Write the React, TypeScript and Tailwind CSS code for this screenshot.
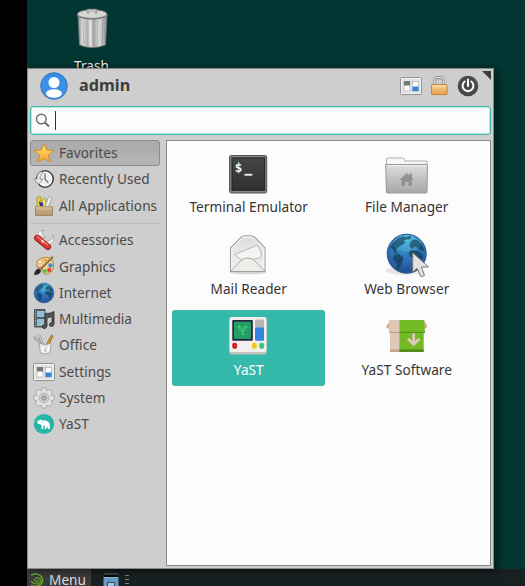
import type { ReactNode } from "react";

function Globe() {
  return (
    <g>
      <circle cx="20" cy="20" r="19.5" fill="url(#globe)" stroke="#24558a" strokeWidth="1" />
      <path
        d="M3 15 L6 9 L12 4 L18 2.5 L21 5 L17 7 L19 9 L14 12 L11 14 L9 17 L11 20 L8 19 L5 14 Z M8 21 L12 20 L17 24 L15 30 L12 36 L10 35 L10 30 L6 25 Z M22 19 L25 16 L29 17 L32 17 L37 22 L34 28 L31 31 L28 24 L23 23 Z M23 10 L26 6 L31 6 L36 12 L38 18 L33 16 L29 13 L25 15 L23 13 Z M20 3 L24 2 L24 5 L21 6 Z"
        fill="#174766"
        opacity="0.88"
      />
      <ellipse cx="20" cy="10" rx="14" ry="8" fill="#8be7ff" opacity="0.13" />
    </g>
  );
}

function Panel() {
  return (
    <g>
      <rect x="0.5" y="2.5" width="21" height="17" rx="1" fill="#f2f2f2" stroke="#929292" />
      <rect x="2" y="4" width="18" height="14" fill="#e2e3e3" />
      <rect x="4" y="6.5" width="6" height="9.5" fill="#fff" stroke="#a4a4a4" strokeWidth="0.6" />
      <rect x="4" y="6" width="6" height="4.5" fill="#777" />
      <rect x="12.5" y="6.5" width="6" height="9.5" fill="#fff" stroke="#a4a4a4" strokeWidth="0.6" />
      <rect x="12.5" y="11.5" width="6" height="4.5" fill="#3685dc" />
    </g>
  );
}

const teeth = [0, 45, 90, 135, 180, 225, 270, 315];

const small: Record<string, ReactNode> = {
  Favorites: (
    <path d="M11 1.5 L13.7 8 L20.8 8.5 L15.4 13.1 L17.2 20 L11 16.3 L4.8 20 L6.6 13.1 L1.2 8.5 L8.3 8 Z" fill="url(#star)" stroke="#d58d21" strokeWidth="1" strokeLinejoin="round" />
  ),
  "Recently Used": (
    <g>
      <circle cx="12" cy="11" r="8.2" fill="#eee" stroke="#454545" strokeWidth="1.6" />
      <circle cx="12" cy="11" r="6.6" fill="none" stroke="#fff" strokeWidth="1.2" />
      <path d="M12 5.5 V11 L15.5 15" fill="none" stroke="#555" strokeWidth="1.1" />
      <path d="M8.5 3.5 C4.5 5 4 8 4 11 H.7 L5.5 16.5 L10 11 H7 C7 8 8 6 10 5 Z" fill="#e7e7e7" stroke="#777" strokeWidth="0.7" />
    </g>
  ),
  "All Applications": (
    <g>
      <path d="M4 2 H8 V5 L7 7 L8 12 H4 Z" fill="#edce35" stroke="#947c16" strokeWidth="0.6" />
      <path d="M9 5 L12 3 L14 11 L10 12 Z" fill="#f2db55" stroke="#9a8023" strokeWidth="0.6" />
      <path d="M6 6.5 L10 8 V12 H7 Z" fill="#373d84" />
      <path d="M15 3 Q19 0 18.5 4 L15.5 12 H12 Z" fill="#eee" stroke="#888" strokeWidth="0.7" />
      <path d="M2.5 11.5 H19.5 V20.5 H2.5 Z" fill="url(#box)" stroke="#927c5e" strokeWidth="0.8" />
      <path d="M3 12 H19 M3 14 H19" stroke="#dfc39b" strokeWidth="0.8" />
    </g>
  ),
  Accessories: (
    <g>
      <path d="M10 8 L4 5.5 L6.5 2.5 L11 1 L8.5 4 L13 9 Z M14 13 L18 11 L20 6 L21 12 L16 16 Z" fill="#f5f5f5" stroke="#999" strokeWidth="0.7" />
      <path d="M4.2 9 L15 17.8" stroke="#8d1715" strokeWidth="6.2" strokeLinecap="round" />
      <path d="M4.2 8.8 L15 17.5" stroke="#d83a33" strokeWidth="4.9" strokeLinecap="round" />
      <path d="M4 7.4 L15 16" stroke="#f18a7d" strokeWidth="1.1" />
      <path d="M8 11.2 L11 13.6 M10.2 10.9 L9 13.8" stroke="#fff" strokeWidth="0.9" />
    </g>
  ),
  Graphics: (
    <g>
      <path d="M4 12 Q2 5 9 3 Q18 0 20.5 8 Q22 17 14 19 Q10 20 10 16 Q9 12 4 12 Z" fill="#efd19d" stroke="#b4813f" strokeWidth="1" />
      <circle cx="7" cy="7" r="2" fill="#fff4c9" stroke="#c58b40" strokeWidth="0.6" />
      <circle cx="12" cy="5.3" r="1.7" fill="#f3a538" />
      <circle cx="17.5" cy="10.5" r="2.2" fill="#438ad0" />
      <circle cx="16.3" cy="15" r="2.1" fill="#e23b32" />
      <circle cx="12" cy="16" r="2.1" fill="#61c44a" />
      <path d="M7 14.5 L20 1.5" stroke="#765528" strokeWidth="2" />
      <path d="M7 14 L20 1" stroke="#ddb25c" strokeWidth="0.8" />
      <path d="M1 20 Q2 14 6 13.5 L8 16 Q7 20 1 20 Z" fill="#272727" />
    </g>
  ),
  Internet: (
    <g transform="translate(0.8 0.8) scale(.51)"><Globe /></g>
  ),
  Multimedia: (
    <g>
      <path d="M1.5 1.5 H12 V19 H1.5 Z" fill="#525b60" stroke="#3c4447" strokeWidth="0.8" />
      <path d="M4 3 H11.5 V9 H4 Z M4 11 H11.5 V18 H4 Z" fill="#91bed5" />
      <path d="M2.7 2.5 V19" stroke="#ddd" strokeWidth="1" strokeDasharray="1 1.4" />
      <path d="M12 5.5 Q17 6 21 3.5 V16 Q21 18.5 18 18.5 Q16 18 16.5 16 Q17 14.5 19 14.5 V8.5 L14 10 V18 Q13.5 21 10.5 20.5 Q8.3 19.5 9.5 17.5 Q10.5 16.5 12 16.8 Z" fill="#555" stroke="#2e2e2e" strokeWidth="0.8" />
    </g>
  ),
  Office: (
    <g>
      <path d="M18.3 1 L20 2 L15 13 L12.5 12 Z" fill="#d7922e" stroke="#906023" strokeWidth="0.7" />
      <path d="M1.5 2 Q2 5 5 6 L10 13 M6 1 Q8 4 8 7 L11 12" fill="none" stroke="#888" strokeWidth="2.2" />
      <path d="M1.5 2 Q2 5 5 6 L10 13 M6 1 Q8 4 8 7 L11 12" fill="none" stroke="#ddd" strokeWidth="1" />
      <path d="M6 9 Q12 12 18 9 L17 19 Q12 21 7.5 19 Z" fill="#eee" fillOpacity="0.85" stroke="#999" strokeWidth="0.8" />
      <path d="M9 13 L9.5 18 M15.5 12 L15 18" stroke="#fff" strokeWidth="1.4" />
      <path d="M12.5 14 V18" stroke="#bbb" strokeWidth="1.4" />
    </g>
  ),
  Settings: <Panel />,
  System: (
    <g>
      {teeth.map((angle) => (
        <rect key={angle} x="8.6" y="0.9" width="4.8" height="5" rx="1.2" fill="#e2e2e2" stroke="#999" strokeWidth="0.8" transform={`rotate(${angle} 11 11)`} />
      ))}
      <circle cx="11" cy="11" r="8" fill="#e0e0e0" stroke="#a2a2a2" strokeWidth="0.6" />
      {teeth.map((angle) => (
        <rect key={angle} x="9.1" y="2" width="3.8" height="4" fill="#e2e2e2" transform={`rotate(${angle} 11 11)`} />
      ))}
      <circle cx="11" cy="11" r="4.9" fill="#cfcfcf" stroke="#ababab" strokeWidth="0.8" />
      <circle cx="11" cy="11" r="2.2" fill="#b5b5b5" stroke="#888" strokeWidth="0.9" />
    </g>
  ),
  YaST: (
    <g>
      <circle cx="11" cy="11" r="10.1" fill="#27b6a5" />
      <path d="M4.5 6.3 L5.6 8 L7.2 6.5 L9 7.3 L13.5 7.7 Q16 8.5 16.8 11 V16 H15.1 L14.3 13.3 L13.3 16 H11.8 L12 13 L10.6 12.5 L10.3 16 H8.6 L8.4 12 L6.5 11 L4.6 10.8 Z" fill="#fff" />
      <path d="M8.5 8 L9.6 10.2" stroke="#74cec4" strokeWidth="0.7" />
    </g>
  ),
};

const large: Record<string, ReactNode> = {
  "Terminal Emulator": (
    <g>
      <rect x="3.5" y="4.5" width="37.2" height="37.5" rx="1.8" fill="#858783" stroke="#555753" />
      <rect x="6" y="7" width="32.5" height="32.2" fill="url(#term)" stroke="#252525" strokeWidth="1.2" />
      <text x="8.8" y="20.5" fill="#f5f5f5" fontFamily="DejaVu Sans Mono, monospace" fontWeight="700" fontSize="12.5">$</text>
      <rect x="18.5" y="22.8" width="7.8" height="1.9" fill="#eee" />
    </g>
  ),
  "File Manager": (
    <g>
      <path d="M2.5 15 V8 Q2.5 7 4 7 H19 Q20.5 7 20.5 10 H43 V15 Z" fill="#f7f7f7" stroke="#b0b0b0" />
      <path d="M1.7 13.5 H43.5 L43 41.2 Q42.9 42 42 42 H3.3 Q2.5 42 2.4 41 Z" fill="url(#folder)" stroke="#999" />
      <path d="M2.8 14.6 H42.4" stroke="#f1f1f1" />
      <path d="M15.5 29 L22.7 22 L25.3 24.5 V22.5 H28 V27 L30 29 H27.8 V35 H24.5 V31 H21 V35 H17.7 V29 Z" fill="#929292" />
    </g>
  ),
  "Mail Reader": (
    <g>
      <ellipse cx="22" cy="39.5" rx="18" ry="1.7" fill="#b7b7b7" opacity=".55" />
      <path d="M4.5 38.5 V15 L15 4.3 Q17 2.8 19 2.8 H24.5 Q26.5 2.8 29 4.5 L39 15 V38.5 Z" fill="url(#mail)" stroke="#a0a09c" strokeWidth="1.1" />
      <path d="M5.8 37.3 V15.5 L16 5 Q17 4 19 4 H24.5 Q26 4 28 5.4 L37.7 15.5 V37.3" fill="none" stroke="#fafafa" />
      <path d="M8.5 21.5 L31.5 12.2 L35.8 21 L34 25 L17 28 Z" fill="#f4f4f2" stroke="#b9b9b4" />
      <path d="M5 38 L15.5 27 Q18 25 21.8 25 Q25.5 25 28 27 L38.5 38" fill="#eceeea" stroke="#a8aaa5" />
    </g>
  ),
  "Web Browser": (
    <g>
      <ellipse cx="20" cy="37.5" rx="18" ry="4.5" fill="#bbb" opacity=".35" />
      <g transform="translate(2.7 .7)"><Globe /></g>
      <path d="M28.7 19.7 V39 L33.2 35.4 L36.6 43.3 Q38 44.3 40.5 42.3 L37.3 34 H44.5 Z" fill="#e2e2e2" stroke="#777" strokeWidth="1" />
    </g>
  ),
  YaST: (
    <g>
      <rect x="3.5" y="3.5" width="37" height="37" rx="2" fill="#c6c2bd" />
      <rect x="3.5" y="3" width="37" height="35" rx="2" fill="#f2f0ee" />
      <rect x="6.3" y="6" width="20.5" height="20.8" rx=".8" fill="#26233a" />
      <rect x="8" y="7.7" width="17" height="17.2" fill="#26a269" />
      <path d="M12.5 12 L16.5 17 V21 M20.5 12 L16.5 17" fill="none" stroke="#3cc97c" strokeWidth="3" />
      <path d="M8.5 11 H25 M8.5 15 H25 M8.5 19 H25 M8.5 23 H25 M11 8 V25 M15 8 V25 M19 8 V25 M23 8 V25" stroke="#208c5a" strokeWidth=".7" opacity=".6" />
      <rect x="29" y="5.5" width="9" height="21.2" rx="1" fill="#b7b5b1" />
      <rect x="29" y="13.5" width="9" height="13.2" rx="1.5" fill="#3584e4" />
      <rect x="6.3" y="28.7" width="4.8" height="6" rx="1.8" fill="#d71d2a" />
      <rect x="26" y="28.7" width="4.8" height="6" rx="1.8" fill="#f5c619" />
      <rect x="33.3" y="28.7" width="4.8" height="6" rx="1.8" fill="#35ca77" />
    </g>
  ),
  "YaST Software": (
    <g>
      <path d="M6.5 6 L2 13 L6.5 15.5 Z M40.3 6 L43.5 13 L40 15 Z" fill="#d0aa8a" />
      <path d="M5 6 H15.3 V38 H6 V18 H4.8 Z" fill="#dec8b8" />
      <path d="M15.3 6 H40 L41 18 H39.7 V38 H15.3 Z" fill="#73ba25" />
      <path d="M5 18.4 H15.3 M6 36.5 H15.3" stroke="#be967c" />
      <path d="M15.3 18.4 H41" stroke="#4b8c19" />
      <path d="M6 35.3 H15.3 V38 H6 Z" fill="#c8a78e" />
      <path d="M15.3 35.3 H39.7 V38 H15.3 Z" fill="#548d1a" />
      <path d="M29.7 19.3 V30 M24 24.8 L29.7 30.3 L35.4 24.8" fill="none" stroke="#dec8b8" strokeWidth="2.8" />
    </g>
  ),
};

function Category({ name, active = false }: { name: string; active?: boolean }) {
  return (
    <div
      className={`flex h-[26.28px] w-[130px] shrink-0 items-center gap-1 rounded-[3px] border pl-[2px] ${
        active ? "border-[#8c8c8c] bg-linear-to-b from-[#aaaaaa] to-[#b5b5b5]" : "border-transparent"
      }`}
    >
      <svg viewBox="0 0 22 22" className="size-[22px] shrink-0">{small[name]}</svg>
      <span className="pt-[0.5px] whitespace-nowrap">{name}</span>
    </div>
  );
}

function Launcher({ name, active = false }: { name: string; active?: boolean }) {
  return (
    <div className={`flex h-[76px] flex-col items-center rounded-[3px] pt-1 ${active ? "bg-[#35b9ab] text-white" : "text-[#353535]"}`}>
      <svg viewBox="0 0 45 45" className="size-[45px] shrink-0 overflow-visible">{large[name]}</svg>
      <span className="mt-[2px] pl-[0.5px] leading-[18px] whitespace-nowrap">{name}</span>
    </div>
  );
}

function Gradients() {
  return (
    <svg width="0" height="0" className="absolute">
      <defs>
        <radialGradient id="globe" cx=".5" cy=".1" r=".9"><stop stopColor="#49b9d8" /><stop offset=".55" stopColor="#3077b9" /><stop offset="1" stopColor="#254c91" /></radialGradient>
        <linearGradient id="star" x2="0" y2="1"><stop stopColor="#ffe477" /><stop offset="1" stopColor="#f7a52f" /></linearGradient>
        <linearGradient id="box" x2="0" y2="1"><stop stopColor="#cbb38e" /><stop offset="1" stopColor="#b39770" /></linearGradient>
        <linearGradient id="term" x2="0" y2="1"><stop stopColor="#464646" /><stop offset="1" stopColor="#303030" /></linearGradient>
        <linearGradient id="folder" x2="0" y2="1"><stop stopColor="#dedede" /><stop offset="1" stopColor="#a6a6a6" /></linearGradient>
        <linearGradient id="mail" x2="0" y2="1"><stop stopColor="#dcdedb" /><stop offset="1" stopColor="#f2f2f0" /></linearGradient>
        <linearGradient id="metal"><stop stopColor="#8a8a8a" /><stop offset=".16" stopColor="#ddd" /><stop offset=".3" stopColor="#b4b4b4" /><stop offset=".43" stopColor="#e5e5e5" /><stop offset=".55" stopColor="#a5a5a5" /><stop offset=".72" stopColor="#ddd" /><stop offset="1" stopColor="#8a8a8a" /></linearGradient>
        <linearGradient id="lock" x2="0" y2="1"><stop stopColor="#f8d297" /><stop offset="1" stopColor="#e6a24c" /></linearGradient>
        <linearGradient id="avatar" x2="0" y2="1"><stop stopColor="#348ce8" /><stop offset="1" stopColor="#4394e9" /></linearGradient>
      </defs>
    </svg>
  );
}

export default function App() {
  return (
    <div className="relative flex h-[586px] w-[525px] overflow-hidden bg-black font-['Noto_Sans',sans-serif] text-[13.6px] tracking-[0.05px] text-[#4a4a4a]">
      <Gradients />
      <div className="w-[27px] shrink-0" />
      <div className="flex flex-1 flex-col bg-[#023632]">
        <div className="flex flex-1 flex-col">
          <div className="flex w-[130px] flex-col items-center pt-2 text-[#eee]">
            <svg viewBox="0 0 32 42" className="h-[42px] w-8">
              <path d="M2 6 L3.5 37 Q16 42 29.5 37 L31 6 Z" fill="url(#metal)" stroke="#777" strokeWidth=".8" />
              <path d="M7 11 L7.7 36 M12 12 V38 M17 12 V38 M22 12 L21.5 38 M27 11 L26 36" stroke="#777" strokeWidth=".8" opacity=".4" />
              <path d="M1.5 6 V8.5 Q16 14 31 8.5 V6" fill="#999" stroke="#646464" strokeWidth=".8" />
              <ellipse cx="16.2" cy="6" rx="14.7" ry="4.3" fill="#d7d7d7" stroke="#777" strokeWidth=".8" />
              <path d="M12 5.5 V2 H20 V5.5" fill="none" stroke="#777" strokeWidth="2.3" />
              <path d="M12 5.2 V2.2 H20 V5.2" fill="none" stroke="#ddd" />
            </svg>
            <span className="mt-[6px] pr-px leading-[20px] [text-shadow:1px_1px_1px_black]">Trash</span>
          </div>
        </div>
        <div className="flex h-[17px] shrink-0 items-start bg-[#182021] text-[#dedede]">
          <div className="flex h-[17px] w-16 items-start gap-1 bg-[#3c3c3c] pl-[3px]">
            <svg viewBox="0 0 16 16" className="mt-[3px] h-4 w-[15px] shrink-0" fill="none" stroke="#65a52a" strokeWidth="1.7">
              <path d="M1 3 Q6 0 11 3 Q16 8 11 13 Q7 16 1 14" />
              <path d="M1 9 Q4 13 9 12 Q13 9 10 6 Q6 4 5 8 Q6 11 9 9" strokeWidth="1.2" />
              <circle cx="8.4" cy="8" r=".8" fill="#65a52a" stroke="none" />
            </svg>
            <span className="mt-[2px] leading-[17px]">Menu</span>
          </div>
          <svg viewBox="0 0 16 14" className="mt-1 ml-3 h-[14px] w-4">
            <path d="M.5 1 H15.5 V14 H.5 Z" fill="#6a9cc7" />
            <path d="M.5 .5 H15.5 V4 H.5 Z" fill="#080b0c" />
            <path d="M1 1 H15" stroke="#777" />
            <path d="M1 4.5 H15" stroke="#8fc0e4" />
            <path d="M4.5 9.5 H11.5 V14 H4.5 Z" fill="#a9c6dc" stroke="#294b69" />
          </svg>
          <div className="mt-[6px] ml-[6px] flex w-1 flex-col gap-[3px]">
            <i className="h-px bg-[#7d8585]" /><i className="h-px bg-[#7d8585]" /><i className="h-px bg-[#7d8585]" />
          </div>
        </div>
      </div>
      <main className="absolute top-[68px] left-[27px] flex h-[501px] w-[467px] flex-col border border-[#888] bg-[#cecece] shadow-[3px_2px_9px_rgba(0,0,0,.55)]">
        <header className="flex h-[37px] shrink-0 items-start pl-3">
          <svg viewBox="0 0 28 28" className="mt-[3px] size-7">
            <circle cx="14" cy="14" r="13.3" fill="url(#avatar)" stroke="#3876b6" />
            <circle cx="14" cy="10.5" r="5.5" fill="white" />
            <ellipse cx="14" cy="21.5" rx="8" ry="4.2" fill="white" />
          </svg>
          <strong className="mt-1 ml-[11px] text-[16.2px] leading-6 font-bold text-[#3d3d3d]">admin</strong>
          <div className="mt-[6px] ml-auto flex items-center gap-2 pr-[14px]">
            <svg viewBox="0 0 22 22" className="size-[22px]"><Panel /></svg>
            <svg viewBox="0 0 20 22" className="h-[22px] w-[19px]">
              <path d="M5 12 V6.5 Q5 2 9.7 2 Q14.5 2 14.5 6.5 V12" fill="none" stroke="#888" strokeWidth="3" />
              <path d="M5 12 V6.5 Q5 2 9.7 2 Q14.5 2 14.5 6.5 V12" fill="none" stroke="#ddd" strokeWidth="1.4" />
              <rect x="1.5" y="9.5" width="16.5" height="10.5" rx=".7" fill="url(#lock)" stroke="#c28233" />
              <path d="M3 11 H16.5" stroke="#ffe6b8" />
            </svg>
            <svg viewBox="0 0 22 22" className="size-[22px]">
              <circle cx="11" cy="11" r="10.3" fill="#494949" />
              <path d="M7.7 6.5 A5.4 5.4 0 1 0 14.3 6.5 M11 4.5 V11" fill="none" stroke="white" strokeWidth="2" strokeLinecap="round" />
            </svg>
          </div>
          <svg viewBox="0 0 9 9" className="absolute top-[2px] right-[2px] size-[9px]"><path d="M0 0 H9 V9 Z" fill="#3c3c3c" /></svg>
        </header>
        <div className="mx-[2px] flex h-[29px] shrink-0 items-center rounded-[3px] border border-[#42b8aa] bg-[#fcfcfc] shadow-[inset_0_0_0_.5px_#79cfc5]">
          <svg viewBox="0 0 16 16" className="ml-1 size-4" fill="none" stroke="#6d6d6d"><circle cx="6.3" cy="6" r="4.8" strokeWidth="1.4" /><path d="M9.8 9.5 L14 13.5" strokeWidth="2" /></svg>
          <i className="ml-1 h-[19px] w-px bg-[#333]" />
        </div>
        <div className="mx-[2px] mt-[5px] mb-[2px] flex min-h-0 flex-1">
          <nav className="flex w-[136px] shrink-0 flex-col pb-1">
            <Category name="Favorites" active />
            <Category name="Recently Used" />
            <Category name="All Applications" />
            <hr className="mt-1 mb-[3.3px] w-[130px] border-t border-[#bdbdbd]" />
            {["Accessories", "Graphics", "Internet", "Multimedia", "Office", "Settings", "System", "YaST"].map((name) => <Category key={name} name={name} />)}
          </nav>
          <section className="flex-1 border border-[#888] bg-[#fcfcfc] pt-[6px] pl-[5px]">
            <div className="grid grid-cols-[153px_153px] grid-rows-[82px_81px_76px] gap-x-[5px]">
              <Launcher name="Terminal Emulator" />
              <Launcher name="File Manager" />
              <Launcher name="Mail Reader" />
              <Launcher name="Web Browser" />
              <Launcher name="YaST" active />
              <Launcher name="YaST Software" />
            </div>
          </section>
        </div>
      </main>
    </div>
  );
}
